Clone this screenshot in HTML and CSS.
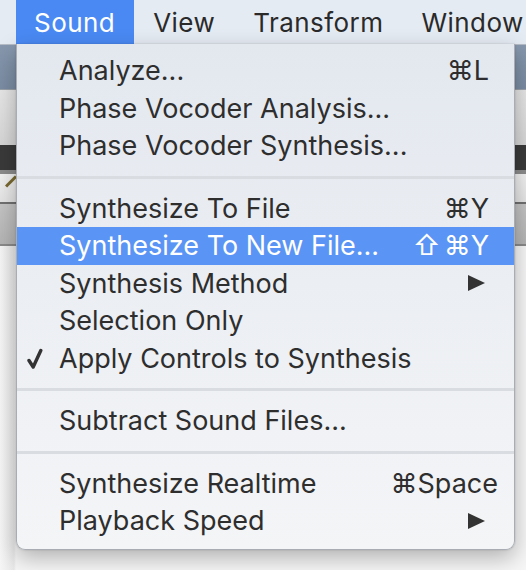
FILE: index.html
```html
<!DOCTYPE html>
<html>
<head>
<meta charset="utf-8">
<link rel="stylesheet" href="styles.css">
</head>
<body>
<div class="screen">
  <div class="menubar">
    <div class="mb-item active">Sound</div>
    <div class="mb-item">View</div>
    <div class="mb-item">Transform</div>
    <div class="mb-item">Window</div>
  </div>
  <div class="app">
    <div class="band titlebar"></div>
    <div class="band toolbar"></div>
    <div class="band darkband"></div>
    <div class="band greyline"></div>
    <div class="band tools"><span class="pencil"></span></div>
    <div class="band midgrey"></div>
    <div class="band content"></div>
  </div>
  <div class="dropdown">
    <div class="row"><span class="label">Analyze...</span><span class="key">⌘L</span></div>
    <div class="row"><span class="label">Phase Vocoder Analysis...</span></div>
    <div class="row"><span class="label">Phase Vocoder Synthesis...</span></div>
    <div class="sep"></div>
    <div class="row"><span class="label">Synthesize To File</span><span class="key">⌘Y</span></div>
    <div class="row hl"><span class="label">Synthesize To New File...</span><span class="key"><span class="shift">⇧</span>⌘Y</span></div>
    <div class="row"><span class="label">Synthesis Method</span><span class="arrow"></span></div>
    <div class="row"><span class="label">Selection Only</span></div>
    <div class="row"><span class="check"><svg width="16" height="22" viewBox="0 0 16 22"><path d="M2 12.5 L6.2 19 L13.8 2.5" fill="none" stroke="#333" stroke-width="3.4" stroke-linecap="round" stroke-linejoin="round"/></svg></span><span class="label">Apply Controls to Synthesis</span></div>
    <div class="sep"></div>
    <div class="row"><span class="label">Subtract Sound Files...</span></div>
    <div class="sep"></div>
    <div class="row"><span class="label">Synthesize Realtime</span><span class="key wide">⌘Space</span></div>
    <div class="row"><span class="label">Playback Speed</span><span class="arrow"></span></div>
  </div>
</div>
</body>
</html>
```

FILE: styles.css
```css
* { box-sizing: border-box; }
html, body { margin: 0; padding: 0; }
body {
  width: 526px;
  height: 570px;
  overflow: hidden;
  font-family: Inter, "Liberation Sans", "DejaVu Sans", sans-serif;
  background: #fafafa;
}
.screen {
  position: relative;
  width: 526px;
  height: 570px;
  overflow: hidden;
}
.menubar {
  height: 45px;
  display: flex;
  align-items: stretch;
  padding-left: 16px;
  background: #e5ebf3;
  border-bottom: 1px solid #b5bcc6;
  white-space: nowrap;
}
.mb-item {
  display: flex;
  align-items: center;
  padding: 0 19px;
  font-size: 26px;
  color: #2a2a2a;
  letter-spacing: 0.45px;
}
.mb-item.active {
  background: #4a89f3;
  color: #ffffff;
  padding: 0 19px 0 18px;
}
.app {
  display: flex;
  flex-direction: column;
  height: 525px;
}
.band { flex: none; }
.titlebar { height: 44px; background: linear-gradient(#8798ae, #7a8ca3); }
.toolbar { height: 56px; background: linear-gradient(#e6e6e6, #d6d6d6); border-top: 1px solid #9aa0a8; }
.darkband { height: 25px; background: #3a3a3a; }
.greyline { height: 4px; background: #8c8c8c; }
.tools { height: 28px; background: linear-gradient(#f2f2f2, #e4e4e4); position: relative; }
.pencil {
  position: absolute;
  left: 4px;
  top: 6px;
  width: 14px;
  height: 3px;
  background: #7a6a30;
  transform: rotate(-45deg);
}
.midgrey { height: 44px; background: linear-gradient(#c4c4c4, #b4b4b4); border-top: 2px solid #707070; border-bottom: 2px solid #8a8a8a; }
.content { flex: 1; background: linear-gradient(90deg, #f6f6f6, #e8e8e8 14px, #f6f6f6 16px); }

.dropdown {
  position: absolute;
  left: 16px;
  top: 44px;
  width: 499px;
  height: 506px;
  padding: 8px 0 10px;
  background: linear-gradient(#e3e8ef, #f4f5f7);
  border: 1px solid #a9adb3;
  border-top: none;
  border-radius: 0 0 9px 9px;
  box-shadow: 0 8px 22px rgba(0,0,0,0.28), 0 0 2px rgba(0,0,0,0.2);
  color: #2e2e2e;
}
.row {
  position: relative;
  height: 37.5px;
  display: flex;
  align-items: center;
  padding-left: 42px;
  padding-right: 25px;
  font-size: 27px;
  white-space: nowrap;
}
.row.hl {
  background: #5a94f5;
  color: #ffffff;
}
.label { flex: 1; }
.key { text-align: right; }
.key.wide { margin-right: -9px; }
.shift { margin-right: 3px; }
.arrow {
  width: 0;
  height: 0;
  margin-right: 4px;
  border-top: 8px solid transparent;
  border-bottom: 8px solid transparent;
  border-left: 17px solid #333333;
}
.check {
  position: absolute;
  left: 10px;
  top: 8px;
  display: flex;
}
.sep {
  height: 25px;
  display: flex;
  align-items: center;
}
.sep::before {
  content: "";
  display: block;
  width: 100%;
  height: 3px;
  background: #d9dce1;
}
```
